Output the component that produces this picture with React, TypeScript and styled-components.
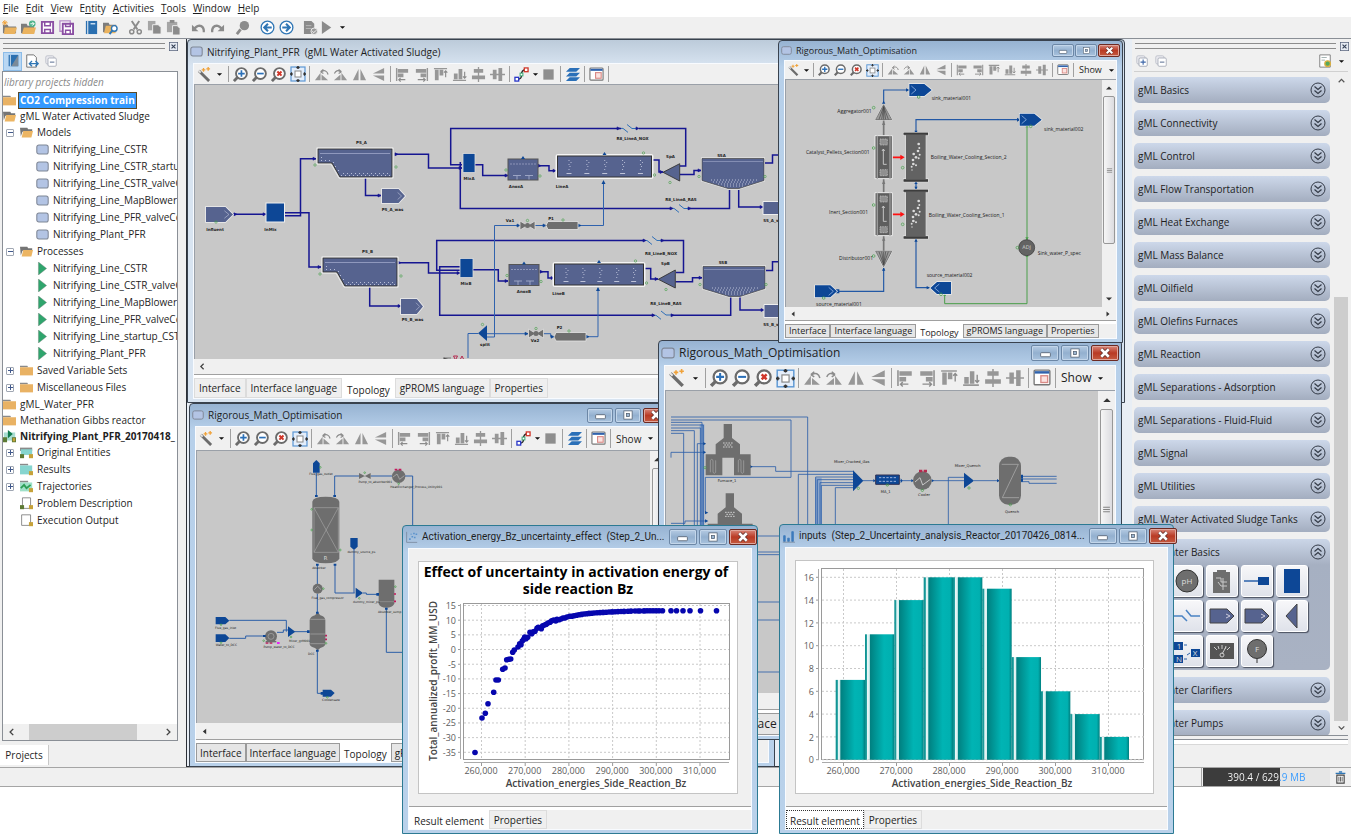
import React from "react";
import styled, { createGlobalStyle, css } from "styled-components";

const GlobalStyle = createGlobalStyle`
  *, *::before, *::after { box-sizing: border-box; }
  html, body { margin: 0; padding: 0; background: #fff; }
  body, button {
    font-family: "Open Sans", "Noto Sans", sans-serif;
    font-size: 10px;
    line-height: 14px;
    color: #1e1e1e;
  }
  button { margin: 0; padding: 0; border: 0; background: none; }
  ul { list-style: none; margin: 0; padding: 0; }
  svg { display: block; flex: none; }
`;

/* ---------- application shell ---------- */

const Shell = styled.div`
  display: flex;
  flex-direction: column;
  overflow: hidden;
  min-height: 835px;
  background: #fff;
`;

const MenuBar = styled.nav`
  display: flex;
  align-items: flex-start;
  gap: 7px;
  height: 17px;
  padding: 0 3px;
  background: #fff;
`;

const MenuItem = styled.button`
  line-height: 16px;
`;

const MainToolbar = styled.div`
  display: flex;
  align-items: flex-start;
  gap: 6px;
  height: 22px;
  padding-top: 1px;
  background: #f0f0f0;
  border-bottom: 1px solid #8a8f96;
`;

const ToolGroup = styled.div`
  display: flex;
  align-items: center;
`;

const ToolButton = styled.button<{ $w?: number; $h?: number; $on?: boolean }>`
  display: flex;
  align-items: center;
  justify-content: center;
  flex: none;
  width: ${(p) => p.$w ?? 19}px;
  height: ${(p) => p.$h ?? 19}px;
  ${(p) => p.$on && css`background: #b9d7f3; border: 1px solid #8cbce8;`}
`;

const Workbench = styled.main`
  display: flex;
  height: 728px;
  background: #f0f0f0;
`;

const StatusBar = styled.footer`
  display: flex;
  justify-content: flex-end;
  align-items: stretch;
  height: 20px;
  background: #f0f0f0;
  border-top: 1px solid #a5a5a5;
  border-bottom: 1px solid #a5a5a5;
`;

const StatusCell = styled.div`
  flex: 1;
  border-right: 1px solid #a5a5a5;
  margin-right: 1px;
`;

const MemoryMeter = styled.div`
  width: 127px;
  background: linear-gradient(90deg, #3c3c3c 77px, #e6e6e6 77px);
`;

const MemoryText = styled.span`
  display: block;
  line-height: 18px;
  text-align: center;
  color: transparent;
  background: linear-gradient(90deg, #ffffff 77px, #3399ff 77px);
  background-clip: text;
  -webkit-background-clip: text;
`;

/* ---------- side panels ---------- */

const SidePanel = styled.aside<{ $w: number }>`
  display: flex;
  flex-direction: column;
  flex: none;
  width: ${(p) => p.$w}px;
`;

const PanelGrip = styled.div<{ $end: number }>`
  display: flex;
  align-items: center;
  gap: 4px;
  height: 12px;
  padding: 2px ${(p) => p.$end}px 0 3px;
`;

const GripLines = styled.div`
  flex: 1;
  height: 6px;
  border-top: 1px solid #8c8c8c;
  border-bottom: 1px solid #8c8c8c;
`;

const PanelTools = styled.div<{ $start: number }>`
  display: flex;
  align-items: center;
  height: 20px;
  padding: 0 3px 0 ${(p) => p.$start}px;
`;

const Spacer = styled.div`
  flex: 1;
`;

const TreeFrame = styled.div`
  display: flex;
  flex-direction: column;
  flex: 1;
  margin: 0 8px 4px 2px;
  border: 1px solid #8a8f96;
  background: #fff;
  overflow: hidden;
`;

const Tree = styled.ul`
  flex: 1;
  padding-top: 2px;
  overflow: hidden;
`;

const TreeRow = styled.li<{ $project?: boolean; $bold?: boolean }>`
  display: flex;
  align-items: center;
  gap: 3px;
  height: ${(p) => (p.$project ? 16 : 17)}px;
  white-space: nowrap;
  font-weight: ${(p) => (p.$bold ? 700 : 400)};
`;

const TreeHint = styled.li`
  height: 18px;
  padding-left: 1px;
  line-height: 16px;
  font-style: italic;
  color: #8a8a8a;
`;

const Indent = styled.span<{ $level: number }>`
  display: flex;
  align-items: center;
  justify-content: center;
  flex: none;
  width: ${(p) => [0, 14, 30][p.$level]}px;
`;

const Expander = styled.button`
  width: 8px;
  height: 8px;
  border: 1px solid #a0a7b3;
  border-radius: 1px;
  display: flex;
  align-items: center;
  justify-content: center;
  background: #fff;
`;

const TreeLabel = styled.span<{ $selected?: boolean }>`
  line-height: 15px;
  padding: 0 1px;
  ${(p) => p.$selected && css`
    background: #3399ff; color: #fff; font-weight: 700; outline: 1px solid #5a4a2a; outline-offset: 0;
  `}
`;

const HBar = styled.div<{ $h: number; $thumbW?: number }>`
  display: flex;
  align-items: center;
  justify-content: space-between;
  flex: none;
  height: ${(p) => p.$h}px;
  padding: 0 4px;
  background: ${(p) =>
    p.$thumbW
      ? `linear-gradient(#cdcdcd, #cdcdcd) 26px 0 / ${p.$thumbW}px 100% no-repeat #f0f0f0`
      : "#f0f0f0"};
`;

const PanelTabs = styled.div`
  display: flex;
  align-items: stretch;
  height: 22px;
`;

const PanelTab = styled.button`
  width: 49px;
  height: 20px;
  background: #fff;
  border-right: 1px solid #c8c8c8;
`;

const PaletteRow = styled.div`
  display: flex;
  flex: 1;
  margin: 0 3px 3px 2px;
  border-top: 1px solid #d0d0d0;
  border-bottom: 1px solid #8a8f96;
  overflow: hidden;
`;

const PaletteFoot = styled.div`
  height: 6px;
  margin: 0 3px 0 2px;
  border-top: 1px solid #8a8f96;
  border-bottom: 1px solid #d8d8d8;
  background: #fff;
`;

const PaletteList = styled.div`
  display: flex;
  flex-direction: column;
  gap: 7px;
  flex: 1;
  padding: 5px 4px 0 0;
`;

const Section = styled.section<{ $open?: boolean }>`
  flex: none;
  height: ${(p) => (p.$open ? 131 : 26)}px;
  border-radius: 5px;
  background: ${(p) =>
    p.$open
      ? "linear-gradient(#cbd6e8, #a6b0c2 26px, #a9b2c3)"
      : "linear-gradient(#cdd8ea, #a3adbf)"};
`;

const SectionHead = styled.button`
  display: flex;
  align-items: center;
  justify-content: space-between;
  width: 100%;
  height: 26px;
  padding: 0 4px;
  text-align: left;
`;

const PaletteGrid = styled.div`
  display: grid;
  grid-template-columns: repeat(5, 32px);
  gap: 3px;
  padding: 0 2px;
`;

const PaletteButton = styled.button`
  display: flex;
  align-items: center;
  justify-content: center;
  height: 32px;
  border-radius: 3px;
  background: linear-gradient(#f7f7f9, #dfe2ea);
  border: 1px solid #fff;
  box-shadow: 1px 1px 1px #4b5160;
`;

const PaletteScroll = styled.div`
  display: flex;
  flex-direction: column;
  align-items: center;
  justify-content: space-between;
  width: 14px;
  padding: 4px 0 3px;
  background: linear-gradient(#cdcdcd, #cdcdcd) 0 225px / 100% 424px no-repeat #f0f0f0;
`;

/* ---------- desktop windows ---------- */

const Desktop = styled.div`
  position: relative;
  z-index: 1;
  flex: 1;
  background: #e8eef5;
  border-left: 1px solid #2b2f36;
  border-bottom: 1px solid #2b2f36;
`;

type Tone = "idle" | "active";

const Win = styled.section<{ $x: number; $y: number; $w: number; $h: number; $tone: Tone; $edge?: string }>`
  position: absolute;
  left: ${(p) => p.$x}px;
  top: ${(p) => p.$y}px;
  width: ${(p) => p.$w}px;
  height: ${(p) => p.$h}px;
  display: flex;
  flex-direction: column;
  padding: 0 5px 3px;
  border: 1px solid ${(p) => p.$edge ?? "#39424e"};
  border-radius: 4px 4px 0 0;
  background: ${(p) =>
    p.$tone === "idle"
      ? "linear-gradient(#bccbda, #d8e4f1 26px)"
      : "linear-gradient(#97b3d2, #b7d0ea 26px, #b9d1ea)"};
`;

const TitleBar = styled.header<{ $h: number; $f: number }>`
  display: flex;
  align-items: center;
  gap: 4px;
  flex: none;
  height: ${(p) => p.$h}px;
  margin: 0 -3px;
  font-size: ${(p) => p.$f}px;
`;

const TitleText = styled.h2<{ $compact?: boolean }>`
  flex: 1;
  margin: 0;
  font: inherit;
  ${(p) => p.$compact && css`font-family: Roboto, "Open Sans", sans-serif;`}
  white-space: pre;
`;

const WinButtons = styled.div<{ $s: number }>`
  display: flex;
  gap: ${(p) => (p.$s > 22 ? 2 : 1)}px;
`;

const WinButton = styled.button<{ $s: number; $close?: boolean }>`
  display: flex;
  align-items: center;
  justify-content: center;
  width: ${(p) => p.$s}px;
  height: ${(p) => (p.$s > 26 ? 16 : p.$s > 22 ? 15 : 13)}px;
  border: 1px solid ${(p) => (p.$close ? "#6d2a22" : "#6c87a6")};
  border-radius: 2px;
  box-shadow: inset 0 0 0 1px ${(p) => (p.$close ? "#e0a79d" : "#c3d6ea")};
  background: ${(p) =>
    p.$close
      ? "linear-gradient(#d9877a, #b93a24 50%, #c55a40)"
      : "linear-gradient(#b5cbe3, #93b0cf 50%, #a9c3de)"};
`;

const WinBody = styled.div`
  display: flex;
  flex-direction: column;
  flex: 1;
  min-height: 0;
  background: #f0f0f0;
  border: 1px solid #f8fbff;
`;

const ToolStrip = styled.div<{ $h: number; $f: number }>`
  display: flex;
  align-items: center;
  flex: none;
  height: ${(p) => p.$h}px;
  overflow: hidden;
  font-size: ${(p) => p.$f}px;
`;

const Separator = styled.i`
  flex: none;
  width: 1px;
  height: 80%;
  margin: 0 2px;
  background: #a0a0a0;
`;

const ShowButton = styled.button<{ $f: number }>`
  display: flex;
  align-items: center;
  gap: 6px;
  padding-left: 3px;
  font-size: ${(p) => p.$f}px;
`;

const CanvasRow = styled.div`
  display: flex;
  flex: 1;
  min-height: 0;
  border-top: 1px solid #9aa0a8;
  border-left: 1px solid #9aa0a8;
  background: #c8c8c8;
  overflow: hidden;
`;

const CanvasArea = styled.div`
  flex: 1;
  overflow: hidden;
`;

const VBar = styled.div<{ $w: number }>`
  display: flex;
  flex-direction: column;
  align-items: center;
  gap: 4px;
  flex: none;
  width: ${(p) => p.$w}px;
  padding: 4px 0;
  background: #f0f0f0;
`;

const VThumb = styled.div<{ $h?: number }>`
  display: flex;
  align-items: center;
  justify-content: center;
  width: 80%;
  flex: ${(p) => (p.$h ? "none" : 1)};
  height: ${(p) => p.$h ?? 0}px;
  border: 1px solid #979797;
  border-radius: 2px;
  background: linear-gradient(90deg, #f6f6f6, #dcdce0);
`;

const TabStrip = styled.div<{ $h: number; $f: number }>`
  display: flex;
  flex: none;
  align-items: stretch;
  height: ${(p) => p.$h}px;
  padding-top: 3px;
  border-top: 1px solid #a0a0a0;
  font-size: ${(p) => p.$f}px;
  background: linear-gradient(#fff 3px, #f0f0f0 3px);
`;

const Tab = styled.button<{ $on?: boolean; $lined?: boolean; $dotted?: boolean }>`
  display: flex;
  align-items: center;
  flex: none;
  padding: 0 ${(p) => (p.$lined ? 3 : 4)}px;
  font-size: inherit;
  border: 1px solid ${(p) => (p.$on ? "#fff" : p.$lined ? "#9a9a9a" : "#dcdcdc")};
  background: ${(p) => (p.$on ? "#fff" : p.$lined ? "#e6e6e6" : "#efefef")};
  ${(p) => p.$on && css`padding-top: 3px;`}
  ${(p) => p.$dotted && css`border: 1px dotted #333; padding: 2px 3px 0;`}
`;

const ChartPane = styled.div`
  flex: 1;
  display: flex;
  padding: 12px 13px 12px 9px;
  min-height: 0;
`;

const ChartCard = styled.figure`
  flex: 1;
  margin: 0;
  border: 1px solid #c4c4c4;
  background: #fff;
  overflow: hidden;
`;

/* ---------- icons ---------- */

const G = "#8b8b8b";
const B = "#2f76b5";

const shapes: Record<string, React.ReactNode> = {
  newProject: (<><path d="M1 5h5l1 2h8v7H1z" fill="#7d7d7d" /><path d="M3 8h13l-2 7H2z" fill="#eab35f" /><path d="M3 0v6M0 3h6M1 1l4 4M5 1L1 5" stroke="#f0a23a" /></>),
  openProject: (<><path d="M0 4h6l1 2h7v8H0z" fill="#7d7d7d" /><path d="M3 8h13l-2 7H1z" fill="#eab35f" /><circle cx="12" cy="4" r="3.5" fill="#4db38a" /><path d="M10 4h4M12 2l2 2-2 2" stroke="#fff" fill="none" /></>),
  save: (<><path d="M2 2h12v12H2z" fill="#fff" stroke="#8a4fa3" strokeWidth="2" /><path d="M5 2v4h6V2M5 14v-4h6v4" fill="none" stroke="#8a4fa3" strokeWidth="1.6" /></>),
  saveAll: (<><path d="M1 1h11v11H1z" fill="#fff" stroke="#b58ac8" strokeWidth="1.4" /><path d="M4 4h11v11H4z" fill="#fff" stroke="#8a4fa3" strokeWidth="2" /><path d="M7 4v3h5V4M7 15v-4h5v4" fill="none" stroke="#8a4fa3" strokeWidth="1.5" /></>),
  book: (<><path d="M2 1h12v14H2z" fill="#2a6fb0" /><path d="M4 1v14" stroke="#fff" /><path d="M7 4h5" stroke="#cfe2f4" strokeWidth="1.5" /></>),
  bookOn: (<><path d="M3 1h11v13H3z" fill="#2a6fb0" /><path d="M14 1v13H6z" fill="#7b8a99" /><path d="M5 1v13" stroke="#dbe9f6" /></>),
  folderFind: (<><path d="M0 3h6l1 2h7v8H0z" fill="#7d7d7d" /><path d="M3 6h12l-2 8H1z" fill="#eab35f" /><circle cx="12" cy="9" r="3" fill="#fff" stroke={B} strokeWidth="1.5" /><path d="M10 11l-3 4" stroke={B} strokeWidth="2" /></>),
  cut: (<><path d="M4 1l6 9M12 1L6 10" stroke={G} strokeWidth="2" /><circle cx="4" cy="12.500" r="2.200" fill="none" stroke={G} strokeWidth="1.600" /><circle cx="12" cy="12.500" r="2.200" fill="none" stroke={G} strokeWidth="1.600" /></>),
  copy: (<><path d="M1 1h8v10H1z" fill="#a6a6a6" /><path d="M6 5h6l3 3v7H6z" fill={G} stroke="#f0f0f0" /></>),
  paste: (<><path d="M1 2h11v11H1z" fill="#a6a6a6" /><path d="M4 0h5v3H4z" fill={G} /><path d="M7 6h5l3 3v7H7z" fill={G} stroke="#f0f0f0" /></>),
  undo: (<path d="M1 5v7h7L5.300 9.500C8 6 13 7 12.500 13h2.300C16 5 8 2 3.500 7.500z" fill={G} />),
  redo: (<path d="M15 5v7H8l2.700-2.500C8 6 3 7 3.500 13H1.200C0 5 8 2 12.500 7.500z" fill={G} />),
  find: (<><circle cx="10" cy="6" r="5" fill={G} /><path d="M6 10l-4 5" stroke={G} strokeWidth="3" /></>),
  back: (<><circle cx="8" cy="8" r="6.800" fill="#fff" stroke={B} strokeWidth="1.400" /><path d="M12.500 8H5M8.500 4L4.500 8l4 4" stroke={B} strokeWidth="2.200" fill="none" /></>),
  forward: (<><circle cx="8" cy="8" r="6.800" fill="#fff" stroke={B} strokeWidth="1.400" /><path d="M3.500 8H11M7.500 4l4 4-4 4" stroke={B} strokeWidth="2.200" fill="none" /></>),
  check: (<><path d="M1 1h8l3 3v11H1z" fill={G} /><path d="M3 6h6M3 9h6" stroke="#bbb" /><circle cx="12" cy="12" r="3.500" fill="#9b9b9b" stroke="#f0f0f0" /><path d="M10 12l1.500 1.500L14 11" stroke="#fff" fill="none" /></>),
  run: (<path d="M2 1l10 7-10 7z" fill={G} />),
  caret: (<path d="M2 5h12l-6 6z" fill="#111" />),
  docArrows: (<><path d="M2 1h8l3 3v11H2z" fill="#fff" stroke="#666" /><path d="M5 11h10M8 8l-3 3 3 3M12 8l3 3-3 3" stroke={B} strokeWidth="1.600" fill="none" /></>),
  collapse: (<><rect x="1" y="1" width="11" height="11" rx="2" fill="#e9e9ee" stroke="#b5b9c4" /><rect x="4" y="4" width="11" height="11" rx="1.500" fill="#fff" stroke="#9a9fac" /><path d="M6.500 9.500h6" stroke="#6a7c9c" strokeWidth="1.500" /></>),
  expandAll: (<><rect x="1" y="1" width="11" height="11" rx="2" fill="#e9e9ee" stroke="#b5b9c4" /><rect x="4" y="4" width="11" height="11" rx="1.500" fill="#fff" stroke="#8f96a6" /><path d="M6 9.500h7M9.500 6v7" stroke="#3d66a8" strokeWidth="1.500" /></>),
  gear: (<><path d="M2 1h12v14H2z" fill="#fff" stroke="#777" /><path d="M4 4h6M4 7h4" stroke="#9aa" /><circle cx="11" cy="11" r="3.200" fill="#57a85a" stroke="#dcb040" strokeWidth="1.500" /></>),
  folder: (<><path d="M0 2h9l1 2H0z" fill="#8a8a8a" /><path d="M0 4h16v10H0z" fill="#e9b264" /></>),
  folderOpen: (<><path d="M0 2h9l1 2h5v3H3l-2 6z" fill="#757575" /><path d="M4 6h12l-2 8H2z" fill="#ecb563" /></>),
  model: (<rect x="1" y="2.500" width="14" height="11" rx="2.500" fill="#b3c4e4" stroke="#7f8796" strokeWidth="1.300" />),
  process: (<path d="M3 0l10 8L3 16z" fill="#2fa56d" stroke="#6d7d75" strokeWidth=".5" />),
  caseRun: (<><path d="M1 3h14v10H1z" fill="#a9ddd2" /><path d="M6 0l6 5-6 5z" fill="#127a4d" /><path d="M0 9h5v6H0zM11 9h5v6h-5z" fill="#5d7a34" /><path d="M12 10h3v4h-3z" fill="#c6a23a" /></>),
  caseFolder: (<><path d="M0 2h15v4H0z" fill="#8a8a8a" /><path d="M1 4h14v7H1z" fill="#86d5cf" /><path d="M0 10h5v5H0z" fill="#5d7a34" /><path d="M11 10h5v5h-5z" fill="#c6a23a" /></>),
  results: (<><path d="M0 1h10v2H0z" fill="#8a8a8a" /><path d="M0 3h15v11H0z" fill="#86d5cf" /><path d="M11 10h5v5h-5z" fill="#c6a23a" /></>),
  traj: (<><path d="M0 1h10v2H0z" fill="#8a8a8a" /><path d="M0 3h15v11H0z" fill="#9fe0c8" /><path d="M1 10l4-4 3 4 5-4" stroke="#2c9d54" strokeWidth="2.200" fill="none" /><path d="M11 10h5v5h-5z" fill="#c6a23a" /></>),
  doc: (<><path d="M3 1h10v13H3z" fill="#fff" stroke="#777" /><path d="M0 10h5v5H0z" fill="#5d7a34" /><path d="M11 10h5v5h-5z" fill="#c6a23a" /></>),
  docLock: (<><path d="M2 1h11v13H2z" fill="#fff" stroke="#777" /><path d="M11 10h5v5h-5z" fill="#c6a23a" /></>),
  close: (<><rect x=".5" y=".5" width="15" height="15" fill="#e6ebf3" stroke="#56627a" strokeWidth="1.600" /><path d="M4.500 4.500l7 7M11.500 4.500l-7 7" stroke="#333f55" strokeWidth="2" /></>),
  wand: (<><path d="M3 4l11 11" stroke="#6c6c6c" strokeWidth="3" /><path d="M2.500 3.500l2.500 2.500" stroke="#e8e8e8" strokeWidth="1.800" /><path d="M8 1v4M6 3h4M13 0v4M11 2h4" stroke="#f0a23a" strokeWidth="1.400" /></>),
  zoomIn: (<><circle cx="9" cy="7" r="5.800" fill="#fff" stroke="#6b6b6b" strokeWidth="2" /><path d="M5 11l-4 4" stroke="#6b6b6b" strokeWidth="3" /><path d="M5.500 7h7M9 3.500v7" stroke="#2b70b8" strokeWidth="1.800" /></>),
  zoomOut: (<><circle cx="9" cy="7" r="5.800" fill="#fff" stroke="#6b6b6b" strokeWidth="2" /><path d="M5 11l-4 4" stroke="#6b6b6b" strokeWidth="3" /><path d="M5.500 7h7" stroke="#2b70b8" strokeWidth="1.800" /></>),
  zoomReset: (<><circle cx="9" cy="7" r="5.800" fill="#fff" stroke="#6b6b6b" strokeWidth="2" /><path d="M5 11l-4 4" stroke="#6b6b6b" strokeWidth="3" /><path d="M6.800 4.800l4.400 4.400M11.200 4.800L6.800 9.200" stroke="#d0372a" strokeWidth="2.200" /></>),
  fit: (<><rect x="1" y="1" width="14" height="14" fill="#e4eefb" stroke="#5b97d4" strokeWidth="1.200" /><rect x="5" y="5" width="6" height="6" fill="#fff" stroke="#888" /><path d="M8 0v3M6.500 2L8 .5 9.500 2M8 16v-3M6.500 14L8 15.500 9.500 14M0 8h3M2 6.500L.5 8 2 9.500M16 8h-3M14 6.500L15.500 8 14 9.500" stroke="#333" strokeWidth="1.200" fill="none" /></>),
  rotL: (<><path d="M1 14h6V6zM8 14h7l-7-6z" fill="#979797" /><path d="M8 5c3-2 6-1 7 3M7 5l3-2.500M7 5l3 2" stroke={G} strokeWidth="1.300" fill="none" /></>),
  rotR: (<><path d="M15 14H9V6zM8 14H1l7-6z" fill="#979797" /><path d="M8 5C5 3 3 4 1.500 7M9 5L6 2.500M9 5L6 7" stroke={G} strokeWidth="1.300" fill="none" /></>),
  flipH: (<path d="M1 14h6V2zM15 14H9V2z" fill="#979797" />),
  flipV: (<path d="M14 1v6H2zM14 15V9H2z" fill="#979797" />),
  alL: (<><path d="M1 1h1.500v14H1zM3 2h11v4H3zM3 7h6v4H3z" fill="#979797" /><path d="M11 13.500H4M6 11.500L4 13.500l2 2" stroke={G} strokeWidth="1.200" fill="none" /></>),
  alR: (<><path d="M13.500 1H15v14h-1.500zM2 2h11v4H2zM7 7h6v4H7z" fill="#979797" /><path d="M4 13.500h8M10 11.500l2 2-2 2" stroke={G} strokeWidth="1.200" fill="none" /></>),
  alT: (<><path d="M1 1h14v1.500H1zM2 3h4v11H2zM7 3h4v6H7z" fill="#979797" /><path d="M13.500 11V4M11.700 6L13.500 4l1.800 2" stroke={G} strokeWidth="1.200" fill="none" /></>),
  alB: (<><path d="M1 13.500h14V15H1zM2 7h4v6H2zM7 2h4v11H7z" fill="#979797" /><path d="M13.500 5v7M11.700 10l1.800 2 1.800-2" stroke={G} strokeWidth="1.200" fill="none" /></>),
  alC: (<path d="M7.300 0h1.400v16H7.300zM3 2h10v4H3zM1 9h14v4H1z" fill="#979797" />),
  alM: (<path d="M0 7.300h16v1.400H0zM3 3h4v10H3zM9 1h4v14H9z" fill="#979797" />),
  route: (<><path d="M4 13c8 0 0-9 8-10" stroke="#222" strokeWidth="1.600" fill="none" /><rect x="1" y="11" width="4" height="4" fill="#fff" stroke="#2a37c8" strokeWidth="1.400" /><rect x="11" y="1" width="4" height="4" fill="#fff" stroke="#d0372a" strokeWidth="1.400" /><rect x="6.500" y="6.500" width="3" height="3" fill="#fff" stroke="#31a56d" /></>),
  square: (<rect x="2.500" y="2.500" width="11" height="11" fill="#8e8e8e" />),
  layers: (<path d="M5 1h11l-4 4H1zM5 6h11l-4 4H1zM5 11h11l-4 4H1z" fill="#2b70b8" />),
  layout: (<><rect x="1" y="1" width="14" height="13" rx="1" fill="#fff" stroke="#777" strokeWidth="1.200" /><path d="M1.500 3h13" stroke="#2f62ad" strokeWidth="2.200" /><rect x="7" y="6" width="6" height="6" fill="#fbe3e1" stroke="#d98a86" strokeWidth="1.200" /></>),
  scatter: (<><path d="M2 1v13h13" stroke="#77889d" fill="none" /><path d="M5 9h2v2H5zM8 6h2v2H8zM11 7h2v2h-2zM10 2h2v2h-2zM13 3h2v2h-2zM7 3h1v2H7z" fill="#5a92cc" /></>),
  bars: (<><path d="M2 7h2v7H2zM7 10h2v4H7zM12 2h2v12h-2z" fill="#3d7bbd" stroke="#3d7bbd" /><path d="M1 15h15" stroke="#77889d" /></>),
  trash: (<><path d="M2 3h12M6 1h4" stroke={B} strokeWidth="1.600" /><path d="M3.500 5h9v10h-9z" fill="#fff" stroke="#444" strokeWidth="1.400" /><path d="M6 7v6M8 7v6M10 7v6" stroke="#444" /></>),
  chevL: (<path d="M10 3L5 8l5 5" stroke="#444" strokeWidth="2.200" fill="none" />),
  chevR: (<path d="M6 3l5 5-5 5" stroke="#444" strokeWidth="2.200" fill="none" />),
  chevU: (<path d="M3 11l5-5 5 5" stroke="#555" strokeWidth="2.200" fill="none" />),
  chevD: (<path d="M3 6l5 5 5-5" stroke="#555" strokeWidth="2.200" fill="none" />),
  triL: (<path d="M11 3v10L5 8z" fill="#333" />),
  triR: (<path d="M5 3v10l6-5z" fill="#333" />),
  triU: (<path d="M2 11h12L8 5z" fill="#333" />),
  triD: (<path d="M2 5h12l-6 6z" fill="#333" />),
  lines: (<path d="M2 4h12M2 8h12M2 12h12" stroke="#777" strokeWidth="1.600" />),
  open: (<><circle cx="8" cy="8" r="7" fill="none" stroke="#333a47" /><path d="M4.500 4.500L8 7.500l3.500-3M4.500 8.500L8 11.500l3.500-3" stroke="#333a47" strokeWidth="1.200" fill="none" /></>),
  shut: (<><circle cx="8" cy="8" r="7" fill="none" stroke="#333a47" /><path d="M4.500 7.500L8 4.500l3.500 3M4.500 11.500L8 8.500l3.500 3" stroke="#333a47" strokeWidth="1.200" fill="none" /></>),
  min: (<rect x="2" y="7" width="12" height="5" rx="1" fill="#fff" stroke="#4f5d6e" />),
  max: (<><rect x="2.500" y="2.500" width="11" height="11" fill="#fff" stroke="#4f5d6e" /><rect x="6" y="6" width="4" height="4" fill="#9db8d4" stroke="#4f5d6e" /></>),
  cross: (<><path d="M3 3l10 10M13 3L3 13" stroke="#5a2a26" strokeWidth="5.500" /><path d="M3 3l10 10M13 3L3 13" stroke="#fff" strokeWidth="3.600" /></>),
};

const Icon = ({ n, s = 14 }: { n: string; s?: number }) => (
  <svg width={s} height={s} viewBox="0 0 16 16" aria-hidden="true">
    {shapes[n]}
  </svg>
);

/* ---------- data ---------- */

const menus: [string, number][] = [
  ["File", 0], ["Edit", 0], ["View", 0], ["Entity", 1], ["Activities", 0], ["Tools", 0], ["Window", 0], ["Help", 0],
];

const mainTools = [
  ["newProject", "openProject", "save", "saveAll"],
  ["book", "folderFind"],
  ["cut", "copy", "paste"],
  ["undo", "redo"],
  ["find"],
  ["back", "forward"],
];

type Node = { t: string; l: number; i: string; e?: "+" | "-"; sel?: boolean; bold?: boolean };
const tree: Node[] = [
  { t: "CO2 Compression train", l: 0, i: "folder", sel: true },
  { t: "gML Water Activated Sludge", l: 0, i: "folderOpen" },
  { t: "Models", l: 1, i: "folderOpen", e: "-" },
  { t: "Nitrifying_Line_CSTR", l: 2, i: "model" },
  { t: "Nitrifying_Line_CSTR_startup", l: 2, i: "model" },
  { t: "Nitrifying_Line_CSTR_valveControl", l: 2, i: "model" },
  { t: "Nitrifying_Line_MapBlower", l: 2, i: "model" },
  { t: "Nitrifying_Line_PFR_valveControl", l: 2, i: "model" },
  { t: "Nitrifying_Plant_PFR", l: 2, i: "model" },
  { t: "Processes", l: 1, i: "folderOpen", e: "-" },
  { t: "Nitrifying_Line_CSTR", l: 2, i: "process" },
  { t: "Nitrifying_Line_CSTR_valveControl", l: 2, i: "process" },
  { t: "Nitrifying_Line_MapBlower", l: 2, i: "process" },
  { t: "Nitrifying_Line_PFR_valveControl", l: 2, i: "process" },
  { t: "Nitrifying_Line_startup_CSTR", l: 2, i: "process" },
  { t: "Nitrifying_Plant_PFR", l: 2, i: "process" },
  { t: "Saved Variable Sets", l: 1, i: "folder", e: "+" },
  { t: "Miscellaneous Files", l: 1, i: "folder", e: "+" },
  { t: "gML_Water_PFR", l: 0, i: "folder" },
  { t: "Methanation Gibbs reactor", l: 0, i: "folder" },
  { t: "Nitrifying_Plant_PFR_20170418_", l: 0, i: "caseRun", bold: true },
  { t: "Original Entities", l: 1, i: "caseFolder", e: "+" },
  { t: "Results", l: 1, i: "results", e: "+" },
  { t: "Trajectories", l: 1, i: "traj", e: "+" },
  { t: "Problem Description", l: 1, i: "doc" },
  { t: "Execution Output", l: 1, i: "docLock" },
];

const sections = [
  "gML Basics", "gML Connectivity", "gML Control", "gML Flow Transportation", "gML Heat Exchange",
  "gML Mass Balance", "gML Oilfield", "gML Olefins Furnaces", "gML Reaction",
  "gML Separations - Adsorption", "gML Separations - Fluid-Fluid", "gML Signal", "gML Utilities",
  "gML Water Activated Sludge Tanks", "gML Water Basics", "gML Water Clarifiers", "gML Water Pumps",
];

const SLATE = "#56638f";
const NAVY = "#0d4796";
const STEEL = "#6e6e6e";

const Art = ({ children }: { children: React.ReactNode }) => (
  <svg width="26" height="26" viewBox="0 0 26 26" aria-hidden="true">{children}</svg>
);
const GlyphText = styled.text`
  font-family: "Open Sans", sans-serif;
  font-size: 8px;
  text-anchor: middle;
  fill: #ddd;
`;

const palette: React.ReactNode[] = [
  <path d="M2 8h22v10H2z" fill={SLATE} />,
  <><circle cx="13" cy="13" r="11" fill={STEEL} stroke="#333" /><GlyphText x="13" y="16">pH</GlyphText></>,
  <><path d="M4 4h17v21H4zM8 2h9v3H8z" fill={STEEL} /><path d="M7 10h5v4h6M9 14l3 4h6M14 10v12" stroke="#c8c8c8" fill="none" /></>,
  <><path d="M0 13h14" stroke="#2b62aa" strokeWidth="1.500" /><path d="M14 9h11v8H14z" fill={NAVY} /></>,
  <path d="M5 1h16v24H5z" fill={NAVY} />,
  <path d="M2 8h22v10H2z" fill={SLATE} />,
  <path d="M0 13h8l5 5M12 7l5 6h9" stroke="#4a83c4" strokeWidth="1.500" fill="none" />,
  <><path d="M1 6h17l7 7-7 7H1z" fill={SLATE} stroke="#444" /><path d="M17 11l4 2-4 2" stroke="#ccd" fill="none" /></>,
  <><path d="M1 6h17l7 7-7 7H1z" fill={SLATE} stroke="#444" /><path d="M17 11l4 2-4 2" stroke="#ccd" fill="none" /></>,
  <path d="M7 13L18 1v24z" fill={SLATE} stroke="#444" />,
  <path d="M2 8h22v10H2z" fill={SLATE} />,
  <><path d="M0 4h9v8H0zM0 17h9v8H0zM17 11h9v8h-9z" fill={NAVY} /><path d="M10 7h3M10 21h3M13 17l3-2" stroke="#2b62aa" /><GlyphText x="5" y="11">1</GlyphText><GlyphText x="5" y="24">N</GlyphText><GlyphText x="21" y="18">X</GlyphText></>,
  <><path d="M1 5h24v16H1z" fill="#555" /><path d="M5 9l3 3M9 8l1 3M13 7v4M17 8l-1 3M21 9l-3 3M13 16l4-7" stroke="#ccc" /><circle cx="13" cy="17" r="2" fill="none" stroke="#ccc" /></>,
  <><circle cx="13" cy="11" r="9.500" fill={STEEL} stroke="#333" /><path d="M13 21v4" stroke="#333" /><GlyphText x="13" y="14">F</GlyphText></>,
];

/* ---------- flowsheet drawings ---------- */

const Sheet = styled.svg<{ $bold?: boolean }>`
  font-family: "DejaVu Sans", sans-serif;
  font-weight: ${(p) => (p.$bold ? 700 : 400)};
  fill: #1b1b1b;
`;

const Label = ({ x, y, s, a = "middle", c, children }: { x: number; y: number; s: number; a?: "start" | "middle" | "end"; c?: string; children: string }) => (
  <text x={x} y={y + s * 0.35} fontSize={s} textAnchor={a} fill={c}>{children}</text>
);

const Pipe = ({ d, c = "#151591", w = 1.2 }: { d: string; c?: string; w?: number }) => (
  <path d={d} fill="none" stroke={c} strokeWidth={w} />
);

const Tag = ({ x, y, w, h, fill = SLATE, o = 1, flip }: { x: number; y: number; w: number; h: number; fill?: string; o?: number; flip?: boolean }) => (
  <>
    <path
      d={flip
        ? `M${x + w} ${y}H${x + w * 0.28}L${x} ${y + h / 2}L${x + w * 0.28} ${y + h}H${x + w}z`
        : `M${x} ${y}H${x + w * 0.72}L${x + w} ${y + h / 2}L${x + w * 0.72} ${y + h}H${x}z`}
      fill={fill} stroke="#eee" strokeWidth={o * 2} paintOrder="stroke"
    />
    <path
      d={flip
        ? `M${x + w * 0.4} ${y + h * 0.25}L${x + w * 0.22} ${y + h / 2}l${w * 0.18} ${h * 0.25}`
        : `M${x + w * 0.68} ${y + h * 0.25}L${x + w * 0.85} ${y + h / 2}l${-w * 0.17} ${h * 0.25}`}
      fill="none" stroke="#c5cbe0" strokeWidth={o * 0.7}
    />
  </>
);

const Ports = ({ at, r = 1.2, c = "#43a047", w = 0.6 }: { at: [number, number][]; r?: number; c?: string; w?: number }) => (
  <>{at.map(([x, y]) => <circle key={`${x}-${y}`} cx={x} cy={y} r={r} fill="none" stroke={c} strokeWidth={w} />)}</>
);

const Dots = ({ at }: { at: [number, number][] }) => (
  <>{at.map(([x, y]) => <rect key={`${x}-${y}`} x={x} y={y} width="1" height="1" fill="#b6bdd6" />)}</>
);

const dotRow = (x0: number, x1: number, y: number, step = 4): [number, number][] =>
  Array.from({ length: Math.floor((x1 - x0) / step) + 1 }, (_, i) => [x0 + i * step, y]);

const Settler = ({ x, y }: { x: number; y: number }) => (
  <>
    <path d={`M${x} ${y}h74v28h-52l-8-14h-14z`} fill={SLATE} stroke="#333" strokeWidth="1" />
    <path d={`M${x - 1.200} ${y - 1.200}h76.400v30.400h-54.200l-8-14h-14.200z`} fill="none" stroke="#e8e8e8" />
    <path d={`M${x + 2} ${y + 4.500}h70`} stroke="#8f98bd" />
    <Dots at={[...dotRow(x + 3, x + 12, y + 11), ...dotRow(x + 25, x + 71, y + 24), ...dotRow(x + 23, x + 71, y + 26), [x + 3, y + 8], [x + 15, y + 13], [x + 17, y + 17], [x + 20, y + 21]]} />
    <Ports at={[[x - 3, y + 16], [x + 78, y + 18]]} />
  </>
);

const Anoxic = ({ x, y }: { x: number; y: number }) => (
  <>
    <rect x={x} y={y} width="30" height="21" fill={SLATE} stroke="#555" />
    <path d={`M${x + 2} ${y + 5}h26`} stroke="#a3abc9" strokeDasharray="2 1" strokeWidth=".7" />
    <path d={`M${x + 5} ${y + 16.500}h8M${x + 17} ${y + 16.500}h8M${x + 9} ${y + 16.500}v4M${x + 21} ${y + 16.500}v4`} stroke="#a3abc9" strokeWidth=".9" />
    <path d={`M${x + 15} ${y - 3}l2 3h-4z`} fill={NAVY} />
    <Ports at={[[x - 2, y + 11], [x + 32, y + 17]]} />
  </>
);

const Aeration = ({ x, y, w }: { x: number; y: number; w: number }) => (
  <>
    <rect x={x - 1} y={y - 1} width={w + 2} height="23" rx="1.500" fill="none" stroke="#f4f4f4" strokeWidth="2" />
    <rect x={x} y={y} width={w} height="21" fill={SLATE} stroke="#333" />
    {[0, 1, 2, 3, 4].map((i) => (
      <React.Fragment key={i}>
        <Dots at={[[x + 11 + i * w * 0.19, y + 4], [x + 13 + i * w * 0.19, y + 6], [x + 11 + i * w * 0.19, y + 8], [x + 12 + i * w * 0.19, y + 10], [x + 11 + i * w * 0.19, y + 13]]} />
        <path d={`M${x + 9 + i * w * 0.19} ${y + 17.500}h5`} stroke="#c9cee0" strokeWidth=".9" />
      </React.Fragment>
    ))}
    <path d={`M${x + w / 2} ${y - 4}l2 3h-4z`} fill={NAVY} />
    <Ports at={[[x + w - 8, y - 3], [x + w + 3, y + 19]]} />
  </>
);

const Clarifier = ({ x, y }: { x: number; y: number }) => (
  <>
    <path d={`M${x} ${y}h62v22l-25 8h-11l-26-8z`} fill={SLATE} stroke="#eee" strokeWidth="2" paintOrder="stroke" />
    <path d={`M${x} ${y}h62v22l-25 8h-11l-26-8z`} fill="none" stroke="#444" strokeWidth=".7" />
    <path d={`M${x + 1} ${y + 3}h60`} stroke="#8f98bd" strokeWidth=".8" />
    <Dots at={[...dotRow(x + 9, x + 54, y + 21, 3), ...dotRow(x + 11, x + 52, y + 23, 3), ...dotRow(x + 16, x + 48, y + 25, 3), ...dotRow(x + 22, x + 42, y + 27, 3)]} />
    <Ports at={[[x - 3, y + 18], [x + 63, y + 18]]} />
  </>
);

const Valve = ({ x, y }: { x: number; y: number }) => (
  <>
    <path d={`M${x} ${y - 4.500}l15 9v-9l-15 9z`} fill={STEEL} stroke="#ddd" strokeWidth=".8" />
    <circle cx={x + 7.500} cy={y} r="2.500" fill={STEEL} />
    <Ports at={[[x + 7.500, y - 5]]} />
  </>
);

const heads = (pts: [number, number][], c = "#151591") => (
  <path d={pts.map(([x, y]) => `M${x - 3} ${y - 1.500}l3 1.500l-3 1.500z`).join("")} fill={c} stroke={c} strokeWidth=".6" />
);

const SludgeSheet = () => (
  <Sheet $bold width="930" height="276" viewBox="196 85 930 276">
    <Pipe w={1.500} d="M234 214.300H267M286 212.700H310V267H322M286 215.700H301.500V158.700H317M396 154.300H429.500V168H463M366.500 178V195.500H382M463 164.700H451.700V128.400H622M640 128.400H686.700V166H681M461.300 162V208.400H673M690 208.400H730.500V190M476 164.700H483.700V175.500H509M539.500 165.700H550V170.700H556M653.500 160H660V172H664M681 174.400H695V170.400H702M764 163H773.500V155H800M739.700 190V207H764" />
    <Pipe w={1.500} d="M399 262.700H429.500V273H461M370.700 287V306H402M461 270.300H437.700V240.500H646M663 240.500H684.500V272.400H677M461 266.700H440.700V315.300H655M673 315.300H731.700V297M474 269.700H499.300V281H509M541 271.700H549V278H554M645.500 268.500H651.700V279H659M676.500 281.700H693.500V277.700H703M766 270.400H773.500V261.700H800M741 297V310H765" />
    <Pipe c="#2f62ad" w={1} d="M528 225.500H495.500V337H488M536 225.500H547M579 225.500H604.500V181M488 333.700H529M544 333.700H551.700V336.700H556M587 336.700H599V288M479 333.500H469V358" />
    <Pipe c="#2f6fb8" w={1} d="M622 128.400h2l5 4M628 124.500l5 4h5M673 208.400h2l5 4M680 204.500l5 4h5M646 240.500h2l5 4M653 236.500l5 4h5M655 315.300h2l5 4M662 311l5 4h5" />
    {heads([[317, 158.700], [322, 267], [463, 168], [382, 195.500], [509, 175.500], [557, 170.700], [664, 172], [702, 170.400], [764, 207], [461, 273], [402, 306], [509, 281], [555, 278], [659, 279], [703, 277.700], [765, 310], [267, 214.300], [238, 214.300], [399, 154.300], [402, 262.700], [621, 128.400], [640, 128.400], [674, 208.400], [692, 208.400], [647, 240.500], [665, 240.500], [656, 315.300], [675, 315.300], [542, 165.700], [544, 271.700]])}
    {heads([[521, 225.500], [547, 225.500], [529, 333.700], [555, 336.700], [582, 225.500], [590, 336.700]], NAVY)}
    <path d="M604.500 180l-2 4h4zM599 287l-2 4h4z" fill={NAVY} />
    <Tag x={207} y={207} w={27} h={15} o={0.8} />
    <rect x="267" y="203" width="18.500" height="19" fill={NAVY} stroke="#eee" strokeWidth="1" />
    <Settler x={319} y={149} />
    <Settler x={324} y={258} />
    <Tag x={383} y={189} w={23} h={14} o={0.8} />
    <Tag x={402} y={299} w={22} h={15} o={0.8} />
    <rect x="464" y="153.500" width="12" height="19" fill={NAVY} stroke="#ddd" strokeWidth=".8" />
    <rect x="461" y="258.500" width="13" height="19" fill={NAVY} stroke="#ddd" strokeWidth=".8" />
    <Anoxic x={509} y={159} />
    <Anoxic x={510} y={264.500} />
    <Aeration x={558.500} y={156} w={94} />
    <Aeration x={555.500} y={264} w={89} />
    <path d="M664 172.300L680.700 163.700V181zM659.300 279.300L676.300 270V288z" fill={SLATE} stroke="#333" strokeWidth=".9" />
    <Clarifier x={703} y={158.500} />
    <Clarifier x={704} y={266.500} />
    <path d="M764 201.500h30v13h-30zM765 304.500h30v13h-30z" fill={SLATE} stroke="#eee" />
    <Valve x={521} y={225.500} />
    <Valve x={529.500} y={333.500} />
    <path d="M549 221.500h30v8h-30l-2-4zM557 332.500h30v8.500h-30l-2-4z" fill={STEEL} stroke="#e4e4e4" strokeWidth=".8" />
    <path d="M479 333.300L488 325.300V341z" fill={NAVY} />
    <path d="M445 358l6 2h-6zM444 358h8" fill="#333" stroke="#555" strokeWidth=".7" />
    <path d="M454.500 356l2 4 2-4zM461 360l2-4 2 4z" fill="none" stroke="#b5294e" />
    <Ports at={[[217, 222], [564, 220], [570, 331], [671, 182.500], [667, 289.500], [483.500, 324.500]]} />
    {([[216, 229.500, "Influent"], [271.500, 229.500, "InMix"], [362.500, 143, "PS_A"], [368.500, 251.500, "PS_B"], [393.500, 210, "PS_A_was"], [413.500, 320, "PS_B_was"], [470, 179, "MixA"], [467, 284, "MixB"], [517, 187, "AnoxA"], [525, 292, "AnoxB"], [563, 187, "LineA"], [559.500, 293.500, "LineB"], [633.500, 138.800, "R8_LineA_NOX"], [662, 254, "R8_LineB_NOX"], [682, 199.500, "R8_LineA_RAS"], [667, 303.500, "R8_LineB_RAS"], [671.500, 156.500, "SpA"], [666.500, 264, "SpB"], [722.500, 156, "SSA"], [724, 263, "SSB"], [511, 220.500, "Va1"], [536, 341, "Va2"], [552, 219, "P1"], [560.500, 328, "P2"], [486, 345, "split"], [775, 221, "SS_A_was"], [775, 325, "SS_B_was"]] as [number, number, string][]).map(([x, y, t]) => (
      <Label key={t} x={x} y={y} s={4}>{t}</Label>
    ))}
  </Sheet>
);

const Reactor = ({ y }: { y: number }) => (
  <>
    <path d={`M297 ${y}h52v129h-52z`} fill="#5e5e5e" stroke="#eee" strokeWidth="3" />
    <path d={`M304 ${y}v129M342 ${y}v129`} stroke="#9a9a9a" strokeWidth="4" />
    <path d={`M312 ${y + 10}h22v18h-22zM312 ${y + 102}h22v18h-22z`} fill="#8f8f8f" stroke="#cfcfcf" strokeDasharray="3 2" strokeWidth="2" />
    <path d={`M322 ${y + 42}v44h10M318 ${y + 46}l4-6 4 6`} stroke="#d8d8d8" fill="none" strokeWidth="2.500" />
  </>
);

const Cooler = ({ y }: { y: number }) => (
  <>
    <path d={`M383 ${y}h73v8h-7v131h7v8h-73v-8h7v-131h-7z`} fill="#626262" stroke="#ddd" strokeWidth="4" paintOrder="stroke" />
    <path d={`M383 ${y + 3}h73M383 ${y + 144}h73`} stroke="#3d3d3d" strokeWidth="5" />
    {[[428, 34, 4], [430, 46, 3], [426, 55, 4], [413, 64, 4], [431, 66, 3], [420, 74, 4], [411, 82, 4], [428, 77, 3], [412, 94, 4], [407, 102, 3], [420, 98, 3], [408, 112, 2]].map(([x, dy, r]) => (
      <circle key={`${x}-${dy}`} cx={x} cy={y + dy} r={r} fill="#dcdcdc" />
    ))}
  </>
);

const Chevron = ({ x, y, dir = 1 }: { x: number; y: number; dir?: number }) => (
  <path d={`M${x} ${y - 12}l${dir * 14} 12l${-dir * 14} 12`} fill="none" stroke="#8fb0e0" strokeWidth="2.500" />
);

const SLabel = ({ x, y, a, children }: { x: number; y: number; a?: "start" | "end"; children: string }) => (
  <text x={x} y={y + 5} fontSize="15" textAnchor={a ?? "start"} fontFamily="Open Sans, sans-serif">{children}</text>
);

const ReactorSheet = () => (
  <Sheet width="317" height="228" viewBox="30 120 951 684">
    <Pipe c="#2258a5" w={3.500} d="M323 188V150H398M420 276V239H730M323 684V754H185M420 596V743H460M420 425V449" />
    <Pipe c="#4a9e4a" w={3} d="M753 258V600M753 646V791H506V762" />
    <Pipe c="#777" w={5} d="M323 240V287M323 416V458M323 587V634" />
    <path d="M323 243l5 12h-10zM323 420l5 12h-10zM323 590l5 12h-10z" fill="#777" />
    <path d="M323 182l5 9h-10zM390 145l10 5-10 5zM415 272h10l-5 8zM723 233l10 6-10 6zM323 682l5 10h-10zM180 748h10v12h-10zM420 596l5 9h-10zM452 738l10 5-10 5zM420 424l5 8h-10zM420 448l5-8h-10z" fill={NAVY} />
    <path d="M748 592h10l-5 9zM748 650h10l-5-6zM506 760l4 8h-8zM748 262h10l-5-5z" fill="#4a9e4a" />
    <Pipe c="#f11" w={5} d="M348 352H378M348 523H378" />
    <path d="M373 344l13 8-13 8zM373 515l13 8-13 8z" fill="#f11" />
    <path d="M400 132h45l22 18-22 18h-45zM731 221h44l22 18-22 18h-44zM117 736h46l20 18-20 18h-46zM525 726h-42l-20 18 20 18h42z" fill={NAVY} stroke="#eee" strokeWidth="4" paintOrder="stroke" />
    <Chevron x={406} y={150} />
    <Chevron x={737} y={239} />
    <Chevron x={158} y={754} />
    <Chevron x={490} y={744} dir={-1} />
    <path d="M323 192L348 240H298z" fill="#9c9c9c" stroke="#eee" strokeWidth="3" />
    <path d="M323 194L347 239H299zM323 200L309 238M323 200L317 238M323 200V238M323 200L329 238M323 200L337 238" fill="none" stroke="#444" strokeWidth="2" />
    <path d="M298 634H348L323 682z" fill="#9c9c9c" stroke="#eee" strokeWidth="3" />
    <path d="M299 634H347L323 680zM309 635L323 674M317 635L323 674M323 635V674M329 635L323 674M337 635L323 674" fill="none" stroke="#444" strokeWidth="2" />
    <Reactor y={287} />
    <Reactor y={458} />
    <Cooler y={278} />
    <Cooler y={449} />
    <circle cx="752" cy="623" r="24" fill="#636363" stroke="#333" strokeWidth="2" />
    <Label x={752} y={623} s={15} c="#ccc">ADJ</Label>
    <Ports r={4} w={2} at={[[428, 171], [293, 203], [293, 324], [380, 383], [293, 495], [380, 553], [764, 259], [724, 623], [293, 648], [143, 774], [495, 763]]} />
    <SLabel x={467} y={175}>sink_material001</SLabel>
    <SLabel x={804} y={267}>sink_material002</SLabel>
    <SLabel x={287} y={214} a="end">Aggregator001</SLabel>
    <SLabel x={281} y={338} a="end">Catalyst_Pellets_Section001</SLabel>
    <SLabel x={464} y={351}>Boiling_Water_Cooling_Section_2</SLabel>
    <SLabel x={276} y={517} a="end">Inert_Section001</SLabel>
    <SLabel x={458} y={525}>Boiling_Water_Cooling_Section_1</SLabel>
    <SLabel x={291} y={656} a="end">Distributor001</SLabel>
    <SLabel x={452} y={707}>source_material002</SLabel>
    <SLabel x={785} y={640}>Sink_water_P_spec</SLabel>
    <SLabel x={120} y={792}>source_material001</SLabel>
  </Sheet>
);

const AbsorberSheet = () => (
  <Sheet width="454" height="274" viewBox="22 28 1362 822">
    <Pipe c="#2c5fa8" w={3} d="M380 93V165M435 163V103H508M543 103H607M646 103H669V300M493 325V454M436 367V454H495M520 454H530V458H566M590 498V632H660M383 367V427M383 456V515M383 625V755H398M119 536H290V570M119 590H168V583H228M262 572H281V565H297M315 570H358" />
    <path d="M370 93V65L380 55L390 65V93z" fill={NAVY} />
    <path d="M482 289H504V315L493 325L482 315z" fill={NAVY} />
    <path d="M368 180Q370 165 408 165T449 180V350Q447 365 408 365T368 350z" fill={STEEL} />
    <path d="M373 198H446V332H373zL446 332M446 198L373 332" fill="none" stroke="#a5a5a5" strokeWidth="2" />
    <Label x={408} y={350} s={16} c="#ddd">R</Label>
    <path d="M508 94L543 112V94L508 112z" fill={STEEL} />
    <circle cx="627" cy="104" r="20" fill={STEEL} />
    <path d="M610 106L622 97L630 113L644 102" stroke="#bbb" fill="none" strokeWidth="2" />
    <path d="M615 84h8M627 84h8" stroke="#c2185b" strokeWidth="5" />
    <path d="M498 438L520 454L498 470zM295 554L317 570L295 586z" fill={NAVY} />
    <path d="M567 414H614V486Q608 498 590 498T567 486z" fill={STEEL} />
    <path d="M567 480H614" stroke="#999" strokeWidth="2" />
    <path d="M613 457h6M613 479h6M406 582h6M406 593h6M228 604h8M240 604h8" stroke="#c2185b" strokeWidth="5" />
    <path d="M262 604h8" stroke="#e0f" strokeWidth="5" />
    <circle cx="384" cy="441" r="15" fill={STEEL} />
    <path d="M374 444L384 434L394 444" stroke="#bbb" fill="none" strokeWidth="2" />
    <path d="M360 535Q362 525 376 521L384 512L392 521Q406 525 407 535V608Q405 616 392 619L384 626L376 619Q362 616 360 608z" fill={STEEL} />
    <path d="M362 533H406M362 577H406M362 606H406" stroke="#aaa" strokeWidth="2" />
    <circle cx="244" cy="584" r="18" fill={STEEL} />
    <path d="M228 600H260" stroke={STEEL} strokeWidth="4" />
    <circle cx="244" cy="584" r="9" fill="none" stroke="#aaa" strokeWidth="2" />
    <path d="M78 526H107L119 537L107 548H78zM78 578H107L119 589L107 601H78zM399 744H424L435 754L424 765H399z" fill={NAVY} />
    <path d="M376 160h8v6h-8zM431 160h8v6h-8zM379 366h8v6h-8zM432 366h8v6h-8zM586 498h8v6h-8zM379 624h8v6h-8zM379 510h8v6h-8zM352 566h8v8h-8zM220 580h8v6h-8zM560 454h8v8h-8zM393 751h8v8h-8z" fill={NAVY} />
    <Ports r={2.500} w={2} at={[[392, 77], [525, 93], [366, 203], [366, 265], [452, 325], [401, 441], [627, 126], [617, 435], [94, 549], [222, 597], [94, 603], [304, 586], [409, 605], [413, 767], [509, 470]]} />
    {([[394, 97, "Flue_gas_outlet"], [557, 122, "Pump_to_absorber001"], [680, 136, "HeatExchanger_Process_Utility001"], [515, 330, "dummy_source_ps"], [388, 378, "Absorber"], [414, 468, "Flue_gas_compressor"], [530, 482, "dummy_mixer_ps"], [600, 512, "Absorber_sump"], [108, 559, "Flue_gas_inlet"], [110, 610, "Water_to_DCC"], [268, 615, "Pump_water_to_DCC"], [330, 597, "Mixer_gtM001"], [365, 637, "DCC"], [424, 776, "Condensate"]] as [number, number, string][]).map(([x, y, t]) => (
      <Label key={t} x={x} y={y} s={9}>{t}</Label>
    ))}
  </Sheet>
);

const Furnace = ({ x, y }: { x: number; y: number }) => (
  <>
    <path d={`M${x + 54} ${y}h25v42l24 19v30h32v63h-50v-53h-35v53h-50v-63h30v-30l24-19z`} fill={STEEL} />
    <path d={`M${x + 52} ${y + 57}h30M${x + 56} ${y + 63}h22M${x + 52} ${y + 69}h30`} stroke="#ccc" strokeDasharray="5 3" strokeWidth="3" />
    <path d={`M${x + 14} ${y + 145}v-36q4-6 8 0v36q4 6 8 0v-36M${x + 98} ${y + 145}v-36q4-6 8 0v36q4 6 8 0v-36`} stroke="#aaa" fill="none" strokeWidth="2" />
  </>
);

const CrackerSheet = () => (
  <Sheet width="430" height="302" viewBox="33 150 1290 906">
    <path d="M134 250h14V1056h-14zM480 410h20V1056h-20z" fill="#8aa5cb" />
    <Pipe c="#2c5fa8" w={2.500} d="M48 228H458V1056M48 237H408V409H151V515M48 244H141V1056M48 252H145V1056M48 261H137V1056M48 269H118V1056M48 277H86V1056M48 350V334H151M127 1056V308H151M287 377H362V391H596M430 1056V400H596M482 1056V408H596M487 1056V416H596M495 1056V425H596M499 1056V433H596M541 1056V440H596M624 419H660M735 419H775M830 419H928M880 1056V409H928M957 419H1032M1098 406H1205M1098 414H1205M1098 422H1122V427H1205M48 547H90V540H151M200 585H458M200 633H458M200 641H430M200 783H458M200 837H458M200 993H458" />
    <path d="M145 303l8 5-8 5zM145 329l8 5-8 5zM150 510l10 5-10 5zM150 535l10 5-10 5zM285 372l8 5-8 5zM655 414l7 5-7 5zM769 414l7 5-7 5zM830 414l7 5-7 5zM1026 414l8 5-8 5zM1098 401h6v10h-6zM1098 412h6v10h-6z" fill={NAVY} />
    <Furnace x={152} y={249} />
    <Furnace x={158} y={457} />
    <path d="M594 388L625 419L594 451zM927 395L957 419L927 442zM737 412l6 7-6 8z" fill={NAVY} />
    <path d="M662 402H733V430H662z" fill={NAVY} stroke="#335" strokeWidth="3" />
    <path d="M672 410H724M672 421H724" stroke="#9db4dc" strokeDasharray="7 4" strokeWidth="3" />
    <circle cx="802" cy="419" r="28" fill={STEEL} />
    <path d="M780 423L795 410L803 432L826 415" stroke="#c5c5c5" fill="none" strokeWidth="3" />
    <path d="M792 390h10M806 390h10" stroke="#b5294e" strokeWidth="7" />
    <rect x="1032" y="347" width="66" height="144" rx="28" fill={STEEL} />
    <path d="M1040 370H1090L1042 470H1092" stroke="#b5b5b5" fill="none" strokeWidth="2" />
    <Ports r={3.500} w={2} at={[[150, 380], [610, 442], [697, 432], [802, 448], [942, 441], [1066, 491]]} />
    {([[216, 420, "Furnace_1"], [590, 362, "Mixer_Cracked_Gas"], [692, 451, "MA_1"], [807, 461, "Cooler"], [938, 374, "Mixer_Quench"], [1071, 512, "Quench"]] as [number, number, string][]).map(([x, y, t]) => (
      <Label key={t} x={x} y={y} s={11}>{t}</Label>
    ))}
  </Sheet>
);

/* ---------- charts ---------- */

const ChartSvg = styled.svg`
  font-family: "DejaVu Sans", sans-serif;
  text-anchor: middle;
`;
const Tick = styled.text<{ $end?: boolean }>`
  font-family: "Open Sans", sans-serif;
  font-size: 9px;
  fill: #5c5c5c;
  text-anchor: ${(p) => (p.$end ? "end" : "middle")};
`;
const AxisTitle = styled.text`
  font-family: "Open Sans", sans-serif;
  font-size: 10px;
  font-weight: 600;
  fill: #444;
`;
const Heading = styled.text`
  font-family: "Open Sans", sans-serif;
  font-size: 14px;
  font-weight: 700;
  fill: #000;
`;

const xTicks = ["260,000", "270,000", "280,000", "290,000", "300,000", "310,000"];

const curve: [number, number][] = [
  [476, 752.5], [483, 718], [486.3, 713.3], [489, 703.7], [494.7, 692.3], [497, 680], [499.3, 680], [503.7, 669.3], [506, 668],
  [507.7, 659.7], [509.7, 659.3], [511.7, 659], [513.7, 652.3], [515.3, 650], [519, 647], [520.7, 643.7], [522, 644.7], [523.3, 641],
  [524.7, 639.3], [525.7, 637], [527, 638.7], [528.7, 637.3], [531, 632.3], [532.7, 633.7], [534.3, 631.7], [536, 631.3], [538, 628.3],
  [539.3, 627.3], [542.3, 628.7], [543.7, 625.7], [545.7, 625], [547.3, 624.3], [549, 623], [551, 622.3], [552.7, 620.7], [554.7, 620],
  [556.7, 621], [558, 619.3], [560, 619.7], [562, 619], [564, 618], [566, 618], [568, 617], [570.7, 616.3], [572.7, 616.3],
  [575, 615.7], [577.5, 615.3], [580, 614.7], [582.500, 614.4], [585, 614], [587.500, 613.7], [590, 613.4], [592.500, 613.2], [595, 613],
  [598, 612.8], [601, 612.6], [604, 612.4], [607, 612.2], [610, 612], [613, 611.9], [616, 611.7], [619, 611.6], [622, 611.5], [625, 611.4],
  [629, 611.2], [632, 611.1], [636, 611], [639, 611], [641, 611], [645, 610.9], [648, 610.8], [651, 610.7], [654, 610.7], [657, 610.7],
  [660, 610.7], [663.500, 610.7], [672, 610.7], [677.500, 610.7], [684, 610.7], [691, 610.7], [701.500, 610.7], [717.500, 610.7],
];

const ScatterChart = () => (
  <ChartSvg width="318" height="233" viewBox="420 562 318 233" role="img" aria-label="Effect of uncertainty in activation energy">
    <Heading x="577" y="577">Effect of uncertainty in activation energy of</Heading>
    <Heading x="579" y="594">side reaction Bz</Heading>
    <rect x="464.500" y="603.500" width="266" height="156" fill="#fff" stroke="#9a9a9a" />
    {xTicks.map((t, i) => (
      <React.Fragment key={t}>
        <path d={`M${482.500 + i * 43.700} 604V759`} stroke="#c9c9c9" strokeDasharray="2 2" />
        <path d={`M${482.500 + i * 43.700} 763v3`} stroke="#999" />
        <Tick x={482 + i * 43.700} y="774">{t}</Tick>
      </React.Fragment>
    ))}
    {[15, 10, 5, 0, -5, -10, -15, -20, -25, -30, -35].map((v, i) => (
      <React.Fragment key={v}>
        <path d={`M465 ${605.500 + i * 14.680}H730`} stroke="#c9c9c9" strokeDasharray="2 2" />
        <path d={`M459 ${605.500 + i * 14.680}h3`} stroke="#999" />
        <Tick $end x="457" y={609 + i * 14.680}>{v}</Tick>
      </React.Fragment>
    ))}
    <path d="M461.500 604V759M465 762.500H730" stroke="#aaa" fill="none" />
    {curve.map(([x, y], i) => <circle key={i} cx={x} cy={y} r="2.800" fill="#0606ae" />)}
    <AxisTitle x="597" y="787">Activation_energies_Side_Reaction_Bz</AxisTitle>
    <AxisTitle x="438" y="681" transform="rotate(-90 438 681)">Total_annualized_profit_MM_USD</AxisTitle>
  </ChartSvg>
);

const counts = [7, 11, 14, 16, 16, 15, 9, 6, 4, 2];

const Histogram = () => (
  <ChartSvg width="356" height="233" viewBox="798 561 356 233" role="img" aria-label="Histogram of activation energies">
    <defs>
      <linearGradient id="bar">
        <stop offset="0" stopColor="#008a8a" />
        <stop offset=".06" stopColor="#2aa3a3" />
        <stop offset=".08" stopColor="#e9f7f7" />
        <stop offset=".15" stopColor="#d5eeee" />
        <stop offset=".17" stopColor="#008080" />
        <stop offset=".65" stopColor="#00b4b4" />
        <stop offset=".9" stopColor="#00b0b0" />
        <stop offset="1" stopColor="#007f7f" />
      </linearGradient>
    </defs>
    <rect x="823.500" y="568.500" width="322" height="191" fill="#fff" stroke="#9a9a9a" />
    {xTicks.map((t, i) => (
      <React.Fragment key={t}>
        <path d={`M${845.500 + i * 53} 569V759`} stroke="#c9c9c9" strokeDasharray="2 2" />
        <path d={`M${845.500 + i * 53} 763v3`} stroke="#999" />
        <Tick x={845 + i * 53} y="774">{t}</Tick>
      </React.Fragment>
    ))}
    {[16, 14, 12, 10, 8, 6, 4, 2, 0].map((v, i) => (
      <React.Fragment key={v}>
        <path d={`M824 ${577.300 + i * 22.800}H1146`} stroke="#c9c9c9" strokeDasharray="2 2" />
        <path d={`M818 ${577.300 + i * 22.800}h3`} stroke="#999" />
        <Tick $end x="816" y={581 + i * 22.800}>{v}</Tick>
      </React.Fragment>
    ))}
    {counts.map((n, i) => (
      <rect key={i} x={837.700 + i * 29.330} y={759.700 - n * 11.400} width="29.330" height={n * 11.400} fill="url(#bar)" />
    ))}
    <path d="M820.500 569V759M824 762.500H1146" stroke="#aaa" fill="none" />
    <AxisTitle x="984" y="787">Activation_energies_Side_Reaction_Bz</AxisTitle>
  </ChartSvg>
);

/* ---------- composite parts ---------- */

const WindowControls = ({ s }: { s: number }) => (
  <WinButtons $s={s}>
    <WinButton $s={s} aria-label="Minimise"><Icon n="min" s={s > 22 ? 13 : 10} /></WinButton>
    <WinButton $s={s} aria-label="Maximise"><Icon n="max" s={s > 22 ? 12 : 9} /></WinButton>
    <WinButton $s={s} $close aria-label="Close"><Icon n="cross" s={s > 22 ? 12 : 9} /></WinButton>
  </WinButtons>
);

const ModelTools = ({ cell, h, f, full, show }: { cell: number; h: number; f: number; full?: boolean; show?: boolean }) => {
  const btn = (n: string) => (
    <ToolButton key={n} $w={cell} $h={cell} aria-label={n}><Icon n={n} s={cell - 4 + (n === "fit" ? 1 : 0)} /></ToolButton>
  );
  return (
    <ToolStrip $h={h} $f={f}>
      {btn("wand")}
      <ToolButton $w={cell - 6} $h={cell} aria-label="Edit options"><Icon n="caret" s={7} /></ToolButton>
      <Separator />
      {["zoomIn", "zoomOut", "zoomReset", "fit"].map((n) => btn(n))}
      <Separator />
      {["rotL", "rotR", "flipH", "flipV"].map((n) => btn(n))}
      <Separator />
      {["alL", "alR", "alT", "alB", "alC", "alM"].map((n) => btn(n))}
      <Separator />
      {full && (<>{btn("route")}<ToolButton $w={8} aria-label="Routing options"><Icon n="caret" s={7} /></ToolButton>{btn("square")}<Separator />{btn("layers")}<Separator /></>)}
      {btn("layout")}
      <Separator />
      {show && <ShowButton $f={f}>Show<Icon n="caret" s={7} /></ShowButton>}
    </ToolStrip>
  );
};

const modelTabs = ["Interface", "Interface language", "Topology", "gPROMS language", "Properties"];

const ModelTabs = ({ h, f, lined }: { h: number; f: number; lined?: boolean }) => (
  <TabStrip $h={h} $f={f} role="tablist">
    {modelTabs.map((t) => (
      <Tab key={t} role="tab" $lined={lined} $on={t === "Topology"} aria-selected={t === "Topology"}>{t}</Tab>
    ))}
  </TabStrip>
);

const ChartWindow = ({ x, y, w, h, icon, title, dotted, children }: { x: number; y: number; w: number; h: number; icon: string; title: string; dotted?: boolean; children: React.ReactNode }) => (
  <Win $x={x} $y={y} $w={w} $h={h} $tone="active" $edge="#2c7a93">
    <TitleBar $h={22} $f={10}>
      <Icon n={icon} s={13} />
      <TitleText $compact>{title}</TitleText>
      <WindowControls s={28} />
    </TitleBar>
    <WinBody>
      <ChartPane><ChartCard>{children}</ChartCard></ChartPane>
      <TabStrip $h={23} $f={10} role="tablist">
        <Tab role="tab" $on $dotted={dotted} aria-selected>Result element</Tab>
        <Tab role="tab">Properties</Tab>
      </TabStrip>
    </WinBody>
  </Win>
);

export default function App() {
  return (
    <Shell>
      <GlobalStyle />
      <MenuBar>
        {menus.map(([m, k]) => (
          <MenuItem key={m}>{m.slice(0, k)}<u>{m[k]}</u>{m.slice(k + 1)}</MenuItem>
        ))}
      </MenuBar>
      <MainToolbar>
        {mainTools.map((g) => (
          <ToolGroup key={g[0]}>
            {g.map((n) => <ToolButton key={n} aria-label={n}><Icon n={n} s={15} /></ToolButton>)}
          </ToolGroup>
        ))}
        <ToolGroup>
          <ToolButton $w={16} aria-label="Check"><Icon n="check" s={15} /></ToolButton>
          <ToolButton aria-label="Run"><Icon n="run" s={15} /></ToolButton>
          <ToolButton $w={10} aria-label="Run options"><Icon n="caret" s={7} /></ToolButton>
        </ToolGroup>
      </MainToolbar>

      <Workbench>
        <SidePanel $w={186}>
          <PanelGrip $end={8}><GripLines /><button aria-label="Close projects"><Icon n="close" s={9} /></button></PanelGrip>
          <PanelTools $start={3}>
            <ToolButton $on aria-label="Library"><Icon n="bookOn" /></ToolButton>
            <ToolButton aria-label="Compare"><Icon n="docArrows" /></ToolButton>
            <ToolButton aria-label="Collapse all"><Icon n="collapse" s={12} /></ToolButton>
          </PanelTools>
          <TreeFrame>
            <Tree>
              <TreeHint>library projects hidden</TreeHint>
              {tree.map((n, i) => (
                <TreeRow key={i} $project={n.l === 0} $bold={n.bold}>
                  {n.l > 0 && (
                    <Indent $level={n.l}>
                      {n.e && (
                        <Expander aria-label={n.e === "+" ? "Expand" : "Collapse"}>
                          <svg width="5" height="5" viewBox="0 0 5 5">
                            <path d={n.e === "+" ? "M0 2.500h5M2.500 0v5" : "M0 2.500h5"} stroke="#41598c" />
                          </svg>
                        </Expander>
                      )}
                    </Indent>
                  )}
                  <Icon n={n.i} s={13} />
                  <TreeLabel $selected={n.sel}>{n.t}</TreeLabel>
                </TreeRow>
              ))}
            </Tree>
            <HBar $h={16} $thumbW={108}><Icon n="chevL" s={10} /><Icon n="chevR" s={10} /></HBar>
          </TreeFrame>
          <PanelTabs><PanelTab>Projects</PanelTab></PanelTabs>
        </SidePanel>

        <Desktop>
          <Win $x={0} $y={0} $w={938} $h={364} $tone="idle">
            <TitleBar $h={23} $f={10}>
              <Icon n="model" s={13} />
              <TitleText>Nitrifying_Plant_PFR  (gML Water Activated Sludge)</TitleText>
            </TitleBar>
            <WinBody>
              <ModelTools cell={19} h={20} f={11} full />
              <CanvasRow><CanvasArea><SludgeSheet /></CanvasArea></CanvasRow>
              <HBar $h={15}><Icon n="chevL" s={9} /></HBar>
              <ModelTabs h={24} f={10} />
            </WinBody>
          </Win>

          <Win $x={420} $y={560} $w={168} $h={168} $tone="active"><WinBody /></Win>

          <Win $x={2} $y={364} $w={483} $h={364} $tone="active">
            <TitleBar $h={22} $f={10}>
              <Icon n="model" s={12} />
              <TitleText>Rigorous_Math_Optimisation</TitleText>
              <WindowControls s={26} />
            </TitleBar>
            <WinBody>
              <ModelTools cell={19} h={23} f={10} full show />
              <CanvasRow>
                <CanvasArea><AbsorberSheet /></CanvasArea>
                <VBar $w={15}><Icon n="triU" s={9} /><VThumb><Icon n="lines" s={8} /></VThumb><Icon n="triD" s={9} /></VBar>
              </CanvasRow>
              <HBar $h={16}><Icon n="triL" s={9} /><Icon n="triR" s={9} /></HBar>
              <ModelTabs h={23} f={10} lined />
            </WinBody>
          </Win>

          <Win $x={471} $y={301} $w={464} $h={400} $tone="active">
            <TitleBar $h={24} $f={12}>
              <Icon n="model" s={14} />
              <TitleText>Rigorous_Math_Optimisation</TitleText>
              <WindowControls s={28} />
            </TitleBar>
            <WinBody>
              <ModelTools cell={22} h={24} f={12} show />
              <CanvasRow>
                <CanvasArea><CrackerSheet /></CanvasArea>
                <VBar $w={17}><Icon n="triU" s={10} /><VThumb $h={200}><Icon n="lines" s={9} /></VThumb></VBar>
              </CanvasRow>
              <HBar $h={16}><Icon n="triL" s={9} /><Icon n="triR" s={9} /></HBar>
              <ModelTabs h={26} f={12} lined />
            </WinBody>
          </Win>

          <Win $x={591} $y={1} $w={345} $h={303} $tone="active">
            <TitleBar $h={19} $f={9}>
              <Icon n="model" s={11} />
              <TitleText>Rigorous_Math_Optimisation</TitleText>
              <WindowControls s={22} />
            </TitleBar>
            <WinBody>
              <ModelTools cell={16} h={18} f={9} show />
              <CanvasRow>
                <CanvasArea><ReactorSheet /></CanvasArea>
                <VBar $w={14}><Icon n="triU" s={8} /><VThumb $h={148}><Icon n="lines" s={7} /></VThumb><Spacer /><Icon n="triD" s={8} /></VBar>
              </CanvasRow>
              <HBar $h={13}><Icon n="triL" s={8} /><Icon n="triR" s={8} /></HBar>
              <ModelTabs h={18} f={9} lined />
            </WinBody>
          </Win>

          <ChartWindow x={215} y={486} w={356} h={309} icon="scatter" title="Activation_energy_Bz_uncertainty_effect  (Step_2_Un...">
            <ScatterChart />
          </ChartWindow>
          <ChartWindow x={592} y={485} w={395} h={310} icon="bars" dotted title="inputs  (Step_2_Uncertainty_analysis_Reactor_20170426_0814...">
            <Histogram />
          </ChartWindow>
        </Desktop>

        <SidePanel $w={219}>
          <PanelGrip $end={2}><GripLines /><button aria-label="Close palette"><Icon n="close" s={9} /></button></PanelGrip>
          <PanelTools $start={0}>
            <ToolButton aria-label="Expand all"><Icon n="expandAll" s={12} /></ToolButton>
            <ToolButton aria-label="Collapse all"><Icon n="collapse" s={12} /></ToolButton>
            <Spacer />
            <ToolButton aria-label="Palette settings"><Icon n="gear" /></ToolButton>
            <ToolButton $w={14} aria-label="Palette menu"><Icon n="caret" s={7} /></ToolButton>
          </PanelTools>
          <PaletteRow>
            <PaletteList>
              {sections.map((s) => {
                const isOpen = s === "gML Water Basics";
                return (
                  <Section key={s} $open={isOpen}>
                    <SectionHead aria-expanded={isOpen}>{s}<Icon n={isOpen ? "shut" : "open"} s={16} /></SectionHead>
                    {isOpen && (
                      <PaletteGrid>
                        {palette.map((a, i) => <PaletteButton key={i} aria-label={`Component ${i + 1}`}><Art>{a}</Art></PaletteButton>)}
                      </PaletteGrid>
                    )}
                  </Section>
                );
              })}
            </PaletteList>
            <PaletteScroll><Icon n="chevU" s={9} /><Icon n="chevD" s={9} /></PaletteScroll>
          </PaletteRow>
          <PaletteFoot />
          <PanelTabs />
        </SidePanel>
      </Workbench>

      <StatusBar>
        <StatusCell />
        <MemoryMeter><MemoryText>390.4 / 629.9 MB</MemoryText></MemoryMeter>
        <ToolButton $w={21} $h={18} aria-label="Collect garbage"><Icon n="trash" s={13} /></ToolButton>
      </StatusBar>
    </Shell>
  );
}
